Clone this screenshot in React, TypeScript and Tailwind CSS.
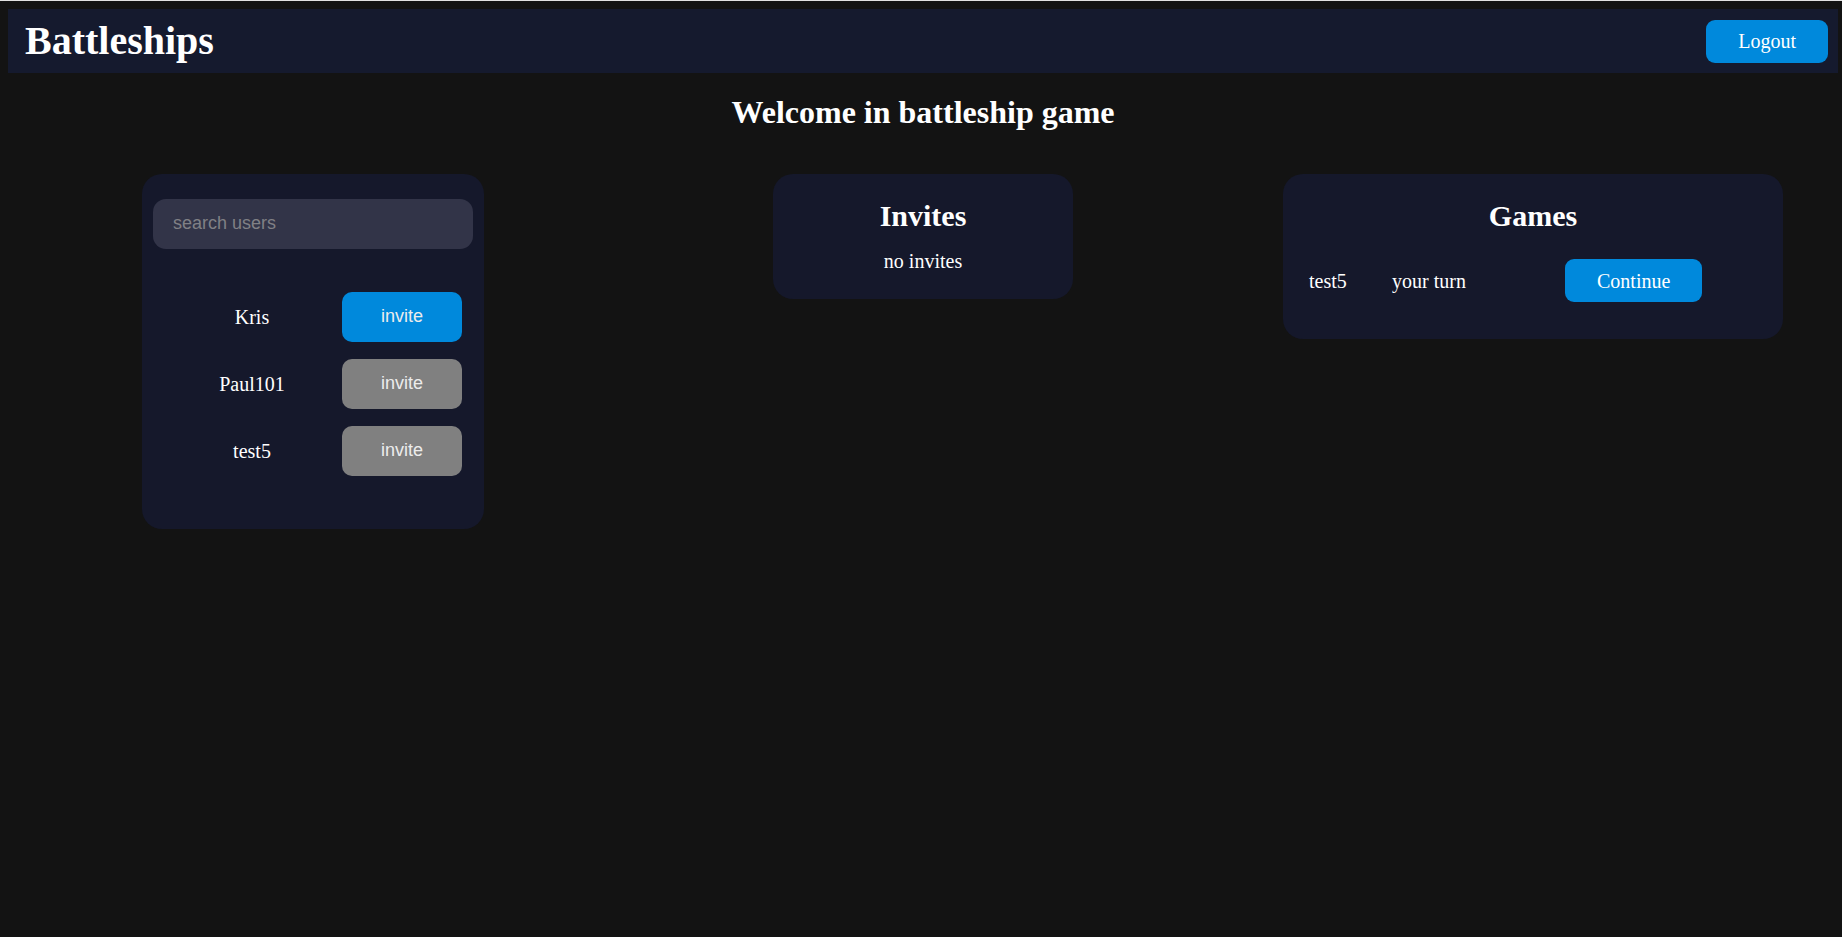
export default function App() {
    const users = [
        { name: "Kris", active: true },
        { name: "Paul101", active: false },
        { name: "test5", active: false },
    ];

    return (
        <div className="min-h-[937px] bg-[#131313] text-white font-['Liberation_Serif',serif]">
            <div className="h-px bg-[#e2e2e2]" />
            <div className="ml-[8px] w-[1830px] pt-[8px]">
                {/* Top bar */}
                <header className="h-[64px] bg-[#151a2e] flex items-center justify-between pl-[17px] pr-[10px]">
                    <h1 className="text-[40px] font-bold leading-[1.15]">Battleships</h1>
                    <button className="h-[43px] px-8 rounded-[9px] bg-[#0089dc] text-[20px] text-white">
                        Logout
                    </button>
                </header>

                <h2 className="mt-[21px] text-center text-[32px] font-bold leading-[1.15]">
                    Welcome in battleship game
                </h2>

                <div className="mt-[43px] grid grid-cols-3">
                    {/* Users */}
                    <div className="flex justify-center items-start">
                        <div className="w-[342px] h-[355px] bg-[#15182b] rounded-[20px] px-[11px] pt-[25px]">
                            <input
                                placeholder="search users"
                                className="w-full h-[50px] rounded-[13px] bg-[#323448] px-[20px] text-[18px] font-['Liberation_Sans',sans-serif] text-white placeholder:text-[#808085] outline-none"
                            />
                            <div className="mt-[43px] flex flex-col gap-[17px]">
                                {users.map((u) => (
                                    <div key={u.name} className="flex items-center pl-[20px] gap-[11px]">
                                        <span className="w-[158px] text-center text-[20px]">{u.name}</span>
                                        <button
                                            className={`w-[120px] h-[50px] rounded-[10px] text-[18px] font-['Liberation_Sans',sans-serif] text-[#ececec] ${u.active ? "bg-[#0089dc]" : "bg-[#808080]"}`}
                                        >
                                            invite
                                        </button>
                                    </div>
                                ))}
                            </div>
                        </div>
                    </div>

                    {/* Invites */}
                    <div className="flex justify-center items-start">
                        <div className="w-[300px] h-[125px] bg-[#15182b] rounded-[20px] pt-[25px] text-center">
                            <h3 className="text-[30px] font-bold leading-[1.15]">Invites</h3>
                            <p className="mt-[17px] text-[20px] leading-[1.15]">no invites</p>
                        </div>
                    </div>

                    {/* Games */}
                    <div className="flex justify-center items-start">
                        <div className="w-[500px] h-[165px] bg-[#15182b] rounded-[20px] pt-[25px]">
                            <h3 className="text-center text-[30px] font-bold leading-[1.15]">Games</h3>
                            <div className="mt-[26px] flex items-center pl-[26px] text-[20px]">
                                <span className="w-[83px]">test5</span>
                                <span className="w-[173px]">your turn</span>
                                <button className="h-[43px] px-8 rounded-[9px] bg-[#0089dc] text-white">
                                    Continue
                                </button>
                            </div>
                        </div>
                    </div>
                </div>
            </div>
        </div>
    );
}
